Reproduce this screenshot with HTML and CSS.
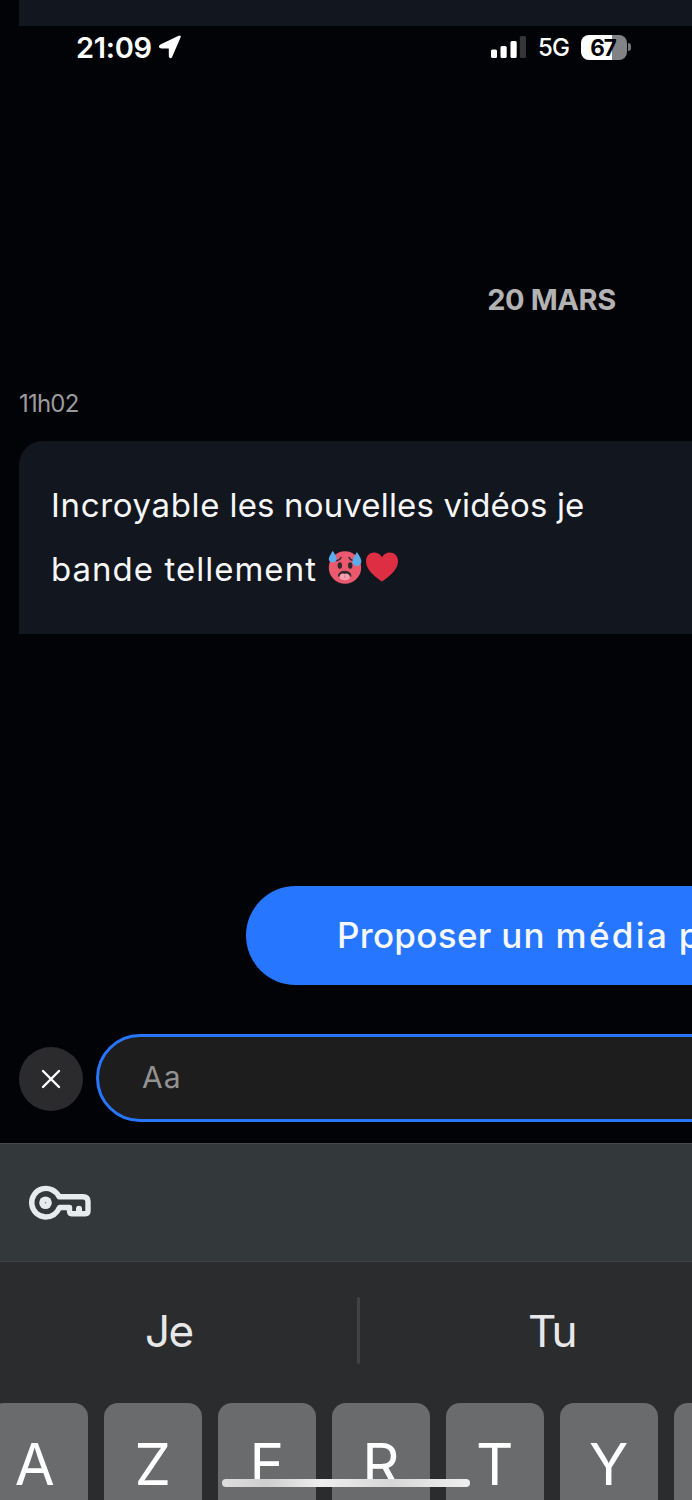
FILE: index.html
```html
<!DOCTYPE html>
<html lang="fr">
<head>
<meta charset="utf-8">
<title>Messages</title>
<link rel="stylesheet" href="styles.css">
</head>
<body>
<main class="screen">
  <div class="previous-message"></div>
  <header class="status-bar">
    <span class="clock">21:09</span>
    <svg class="location" width="24" height="24" viewBox="0 0 24 24"><path d="M22 1.8 13.5 21.5Q12.4 23.4 11.6 21.3V12.6H3Q.6 11.8 2.8 10.2L20.4 1.8Q22.4.9 22 1.8Z"/></svg>
    <div class="indicators">
      <svg class="signal" width="36" height="24" viewBox="0 0 36 24"><rect x="1" y="14.5" width="6" height="8.5" rx="1.5"/><rect x="10.5" y="11" width="6.2" height="12" rx="1.5"/><rect x="20.5" y="6" width="6.2" height="17" rx="1.5"/><rect class="signal-empty" x="29.8" y="1" width="6.2" height="22" rx="1.5"/></svg>
      <span class="network">5G</span>
      <div class="battery">67</div>
      <div class="battery-cap"></div>
    </div>
  </header>

  <section class="chat">
    <div class="date">20 MARS</div>
    <div class="time">11h02</div>
    <div class="bubble">
      <div class="line line-first"><span><span class="lead">Incroyable</span> les nouvelles vidéos je</span></div>
      <div class="line"><span class="line-second">bande tellement</span>
        <svg class="emoji hot" role="img" aria-label="visage brûlant" width="34" height="34" viewBox="0 0 34 34">
          <circle cx="17" cy="17.5" r="16.2" fill="#eb596e"/>
          <ellipse cx="11.8" cy="15.5" rx="2.2" ry="3.3" fill="#33272c"/><ellipse cx="22.2" cy="15.5" rx="2.2" ry="3.3" fill="#33272c"/>
          <path d="M8 10.7Q11.7 10.5 13 7.5M21 7.5Q22.4 10.5 26 10.7" fill="none" stroke="#33272c" stroke-width="1.4" stroke-linecap="round"/>
          <path d="M10.5 26.5Q10.2 21.4 16.7 21.3 23.2 21.4 22.9 26.5" fill="#33272c" stroke="#33272c" stroke-linejoin="round"/>
          <path d="M11.5 27.5Q11.4 23.7 15.2 23.6L16.6 24.1 18.2 23.6Q22 24 21.9 27.5C21 31 12.4 31 11.5 27.5Z" fill="#f4a0b1"/>
          <path d="M16.7 25V28" stroke="#e07688"/>
          <path d="M4.7.8Q9.3 7.4 8.6 9.8C7.5 13.5 1.4 13.2.8 9.4.5 7.2 3 4.2 4.7.8ZM28.9 2Q34.1 9.5 33.2 12.4C31.8 17.4 24.9 16.8 24.3 12 24 9.4 27 5.8 28.9 2Z" fill="#5dadec"/>
        </svg>
        <svg class="emoji heart" role="img" aria-label="cœur" width="34" height="34" viewBox="0 0 34 34"><path d="M17 31.7C13.8 29.2 1 21.3 1 11.3 1 1.7 12.4-.4 17 7.2 21.6-.4 33 1.7 33 11.3 33 21.3 20.2 29.2 17 31.7Z" fill="#dd2e44"/></svg>
      </div>
    </div>
    <div class="propose"><span>Proposer <span class="propose-un">un</span> <span class="propose-media">média</span> p</span></div>
    <div class="composer">
      <div class="close"><svg width="20" height="20" viewBox="0 0 20 20"><path d="M2 2 18 18M18 2 2 18"/></svg></div>
      <div class="input"><span>Aa</span></div>
    </div>
  </section>

  <section class="keyboard">
    <div class="password-bar">
      <svg width="64" height="38" viewBox="0 0 64 38"><path d="M31 12.7H55Q60 12.7 60 17.5V27Q60 29.7 57.5 29.7H43.5Q41.5 29.7 41.5 27V23.5H31.5C28.7 30 23.8 33 17.5 33A14.3 14.3 0 1 1 31 12.7Z" fill="none" stroke="#e6ebed" stroke-width="5.4" stroke-linejoin="round"/><path d="M48 29V24Q48.2 21.8 51 21.8T54 24V29Z" fill="#e6ebed"/><circle cx="17.5" cy="18.7" r="6.3" fill="#e6ebed"/><circle cx="17.5" cy="18.7" r=".8" fill="#788085"/></svg>
    </div>
    <div class="suggestions">
      <span class="suggestion je">Je</span><span class="divider"></span><span class="suggestion tu">Tu</span>
    </div>
    <div class="keys">
      <div class="key key-first">A</div><div class="key">Z</div><div class="key">E</div><div class="key">R</div><div class="key">T</div><div class="key">Y</div><div class="key"></div>
    </div>
  </section>
  <div class="home-indicator"></div>
</main>
</body>
</html>
```
FILE: styles.css
```css
* { box-sizing: border-box; }
html, body { margin: 0; background: #020307; }
.screen {
  position: relative;
  width: 692px;
  height: 1500px;
  overflow: hidden;
  background: #020307;
  color: #fff;
  font-family: Inter, "Liberation Sans", sans-serif;
}
.previous-message { height: 26px; margin-left: 19px; background: #12161e; }
.status-bar {
  display: flex;
  align-items: center;
  height: 42px;
  padding: 0 61px 0 76px;
}
.clock { width: 76px; font-size: 29px; font-weight: 600; letter-spacing: -0.3px; white-space: nowrap; }
.location { margin-left: 6px; fill: #fff; stroke: #fff; stroke-width: 1.6; stroke-linejoin: round; }
.indicators { display: flex; align-items: center; margin-left: auto; }
.signal { fill: #fff; }
.signal .signal-empty { fill: #353539; }
.network { width: 31px; margin-left: 12px; font-size: 24px; font-weight: 500; letter-spacing: -0.9px; white-space: nowrap; }
.battery {
  width: 46px;
  height: 25px;
  margin-left: 12px;
  padding-right: 2px;
  border-radius: 8px;
  background: linear-gradient(90deg, #fff 67%, #828286 67%);
  color: #020307;
  font-size: 22.5px;
  font-weight: 700;
  line-height: 25px;
  letter-spacing: -1px;
  text-align: center;
}
.battery-cap { width: 3px; height: 8px; margin-left: 1px; border-radius: 0 4px 4px 0; background: #77777b; }
.chat { width: 1103px; height: 1075px; }
.date {
  padding-top: 212px;
  height: 318px;
  line-height: 40px;
  color: #b3b3b4;
  font-size: 29px;
  font-weight: 700;
  text-align: center;
  letter-spacing: -0.4px;
}
.time { height: 55px; margin-left: 19px; line-height: 36px; color: #9b9b9d; font-size: 24px; letter-spacing: -0.8px; }
.bubble {
  height: 193px;
  margin-left: 19px;
  padding: 32px;
  border-radius: 24px 0 0 0;
  background: #12161e;
}
.line { display: flex; align-items: center; height: 64px; color: #f6f6f8; font-size: 33px; white-space: nowrap; }
.line-first { letter-spacing: 0.15px; }
.lead { letter-spacing: 0.65px; }
.line-second { letter-spacing: 1.02px; }
.emoji { flex: none; }
.hot { margin: -4px 0 0 11px; }
.heart { margin: -4px 0 0 3px; }
.propose {
  display: flex;
  align-items: center;
  width: 611px;
  height: 99px;
  margin: 252px 0 0 246px;
  padding: 0 0 2px 91px;
  border-radius: 50px;
  background: #2776ff;
  color: #f6f8ff;
  font-size: 35px;
  font-weight: 500;
  letter-spacing: 0.3px;
  white-space: nowrap;
}
.propose-un { letter-spacing: 1.3px; }
.propose-media { letter-spacing: 2.3px; }
.composer { display: flex; align-items: center; gap: 13px; margin: 49px 0 0 19px; }
.close { display: grid; place-items: center; width: 64px; height: 64px; margin-top: 2px; border-radius: 50%; background: #2b2b2d; }
.close svg { fill: none; stroke: #fff; stroke-width: 2.4; stroke-linecap: round; }
.input {
  display: flex;
  align-items: center;
  flex: 1;
  height: 88px;
  padding: 0 0 2px 43px;
  border: 3px solid #2776ff;
  border-radius: 44px;
  background: #1d1d1d;
  color: #929292;
  font-size: 30px;
  letter-spacing: 1px;
}
.keyboard { height: 357px; background: #2b2c2e; }
.password-bar {
  display: flex;
  align-items: center;
  height: 119px;
  padding-left: 28px;
  border-top: 1px solid #44494c;
  border-bottom: 1px solid #3c4144;
  background: #33383b;
}
.suggestions { display: flex; align-items: center; height: 141px; color: #e8e8e9; font-size: 44px; letter-spacing: -1.6px; }
.suggestion { flex: none; margin-top: -4px; }
.je { width: 357px; padding-left: 145px; }
.divider { width: 3px; height: 67px; margin-top: -4px; border-radius: 2px; background: #414244; }
.tu { width: 332px; padding-left: 168px; }
.keys { display: flex; gap: 16.3px; margin-left: -10px; width: 792px; }
.key {
  flex: none;
  width: 97.7px;
  height: 130px;
  padding-top: 25px;
  border-radius: 14px;
  background: #6a6b6d;
  font-size: 58px;
  line-height: 72px;
  text-align: center;
}
.key-first { padding-right: 8px; }
.home-indicator {
  position: absolute;
  left: 222px;
  bottom: 13px;
  width: 248px;
  height: 8px;
  border-radius: 4px;
  background: linear-gradient(90deg, #dedede, #cfcfcf 18%, #efefef 40%, #d7d7d7 68%, #f0f0f0);
}
```
